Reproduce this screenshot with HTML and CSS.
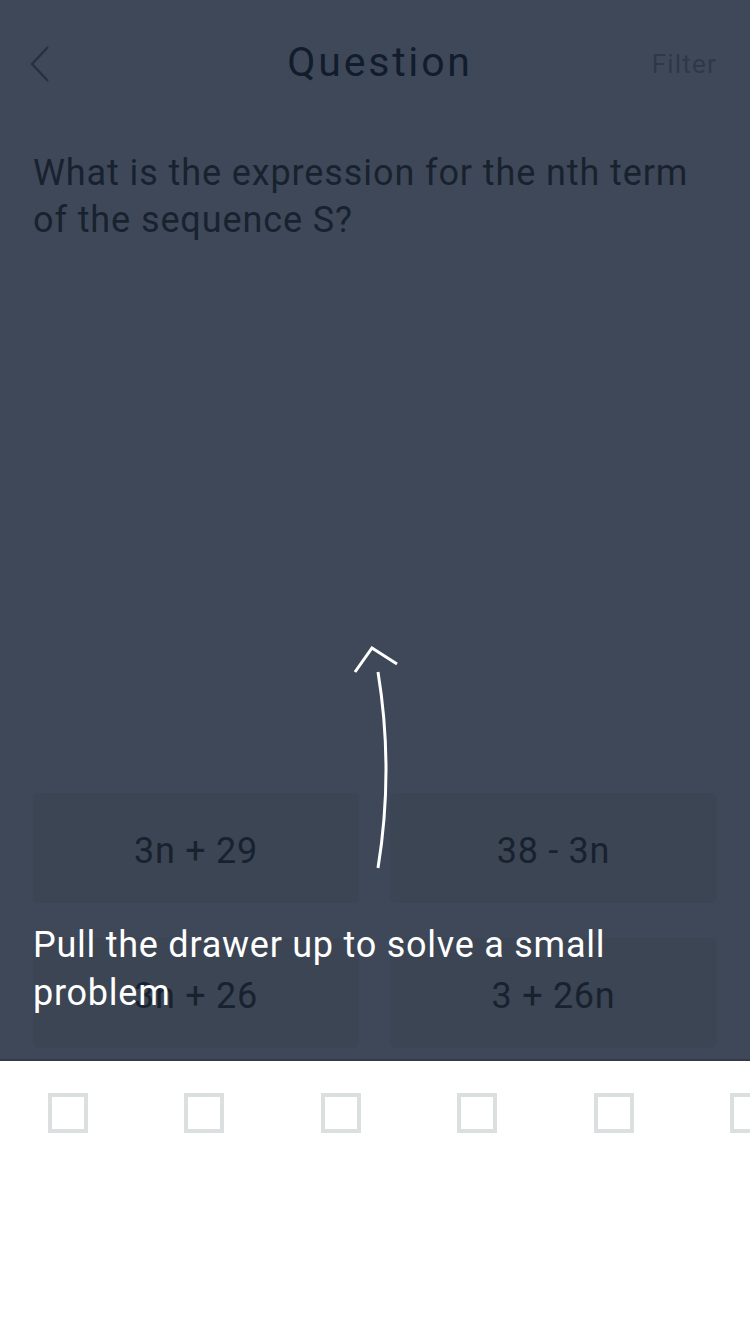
FILE: index.html
```html
<!DOCTYPE html>
<html>
<head>
<meta charset="utf-8">
<link rel="stylesheet" href="styles.css">
</head>
<body>
<div class="screen">
  <div class="dimmed">
    <header class="nav">
      <svg class="back" width="22" height="40" viewBox="0 0 22 40"><path d="M19 3 L3 20 L19 37" fill="none" stroke="#253041" stroke-width="2.4"/></svg>
      <h1 class="title">Question</h1>
      <span class="filter">Filter</span>
    </header>
    <p class="question">What is the expression for the nth term of the sequence S?</p>
    <div class="spacer"></div>
    <div class="answers">
      <div class="card">3n + 29</div>
      <div class="card">38 - 3n</div>
      <div class="card">3n + 26</div>
      <div class="card">3 + 26n</div>
    </div>
    <svg class="arrow" width="60" height="230" viewBox="0 0 60 230"><path d="M32 222 Q48 124 32 26" fill="none" stroke="#fff" stroke-width="3"/><path d="M9 26 L26 2 L51 18" fill="none" stroke="#fff" stroke-width="3"/></svg>
    <p class="hint">Pull the drawer up to solve a small problem</p>
  </div>
  <div class="drawer">
    <span class="box"></span><span class="box"></span><span class="box"></span><span class="box"></span><span class="box"></span><span class="box"></span>
  </div>
</div>
</body>
</html>
```
FILE: styles.css
```css
html, body { margin: 0; padding: 0; }
body { width: 750px; height: 1334px; overflow: hidden; background: #fff; font-family: Roboto, "Open Sans", sans-serif; }
.screen { width: 750px; height: 1334px; display: flex; flex-direction: column; }
.dimmed { position: relative; height: 1059px; background: #3f4858; border-bottom: 2px solid #333b48; display: flex; flex-direction: column; padding: 0 33px; }
.nav { height: 128px; display: flex; align-items: center; justify-content: space-between; position: relative; }
.back { margin-left: -4px; margin-top: 0; }
.title { position: absolute; left: 10px; right: 0; top: 38px; margin: 0; text-align: center; font-weight: 400; font-size: 41px; color: #111c2c; letter-spacing: 2.8px; }
.filter { font-size: 26px; color: #2e3848; margin-right: 0; letter-spacing: 1.2px; }
.question { margin: 22px 0 0; font-size: 36px; line-height: 47px; color: #18222f; letter-spacing: 0.9px; }
.spacer { flex: 1; }
.answers { display: grid; grid-template-columns: 326px 327px; column-gap: 31px; row-gap: 35px; margin-bottom: 11px; }
.card { height: 104px; padding-top: 6px; background: #3c4554; border-radius: 6px; display: flex; align-items: center; justify-content: center; font-size: 36px; color: #18222f; letter-spacing: 0.7px; }
.arrow { position: absolute; left: 346px; top: 646px; }
.hint { position: absolute; left: 33px; top: 921px; width: 620px; margin: 0; font-size: 36px; line-height: 48px; color: #fff; letter-spacing: 0.75px; }
.drawer { flex: 1; display: flex; gap: 96.4px; padding: 32px 0 0 48px; overflow: hidden; }
.box { flex: 0 0 auto; width: 32px; height: 32px; border: 4px solid #dcdfe0; }
```
